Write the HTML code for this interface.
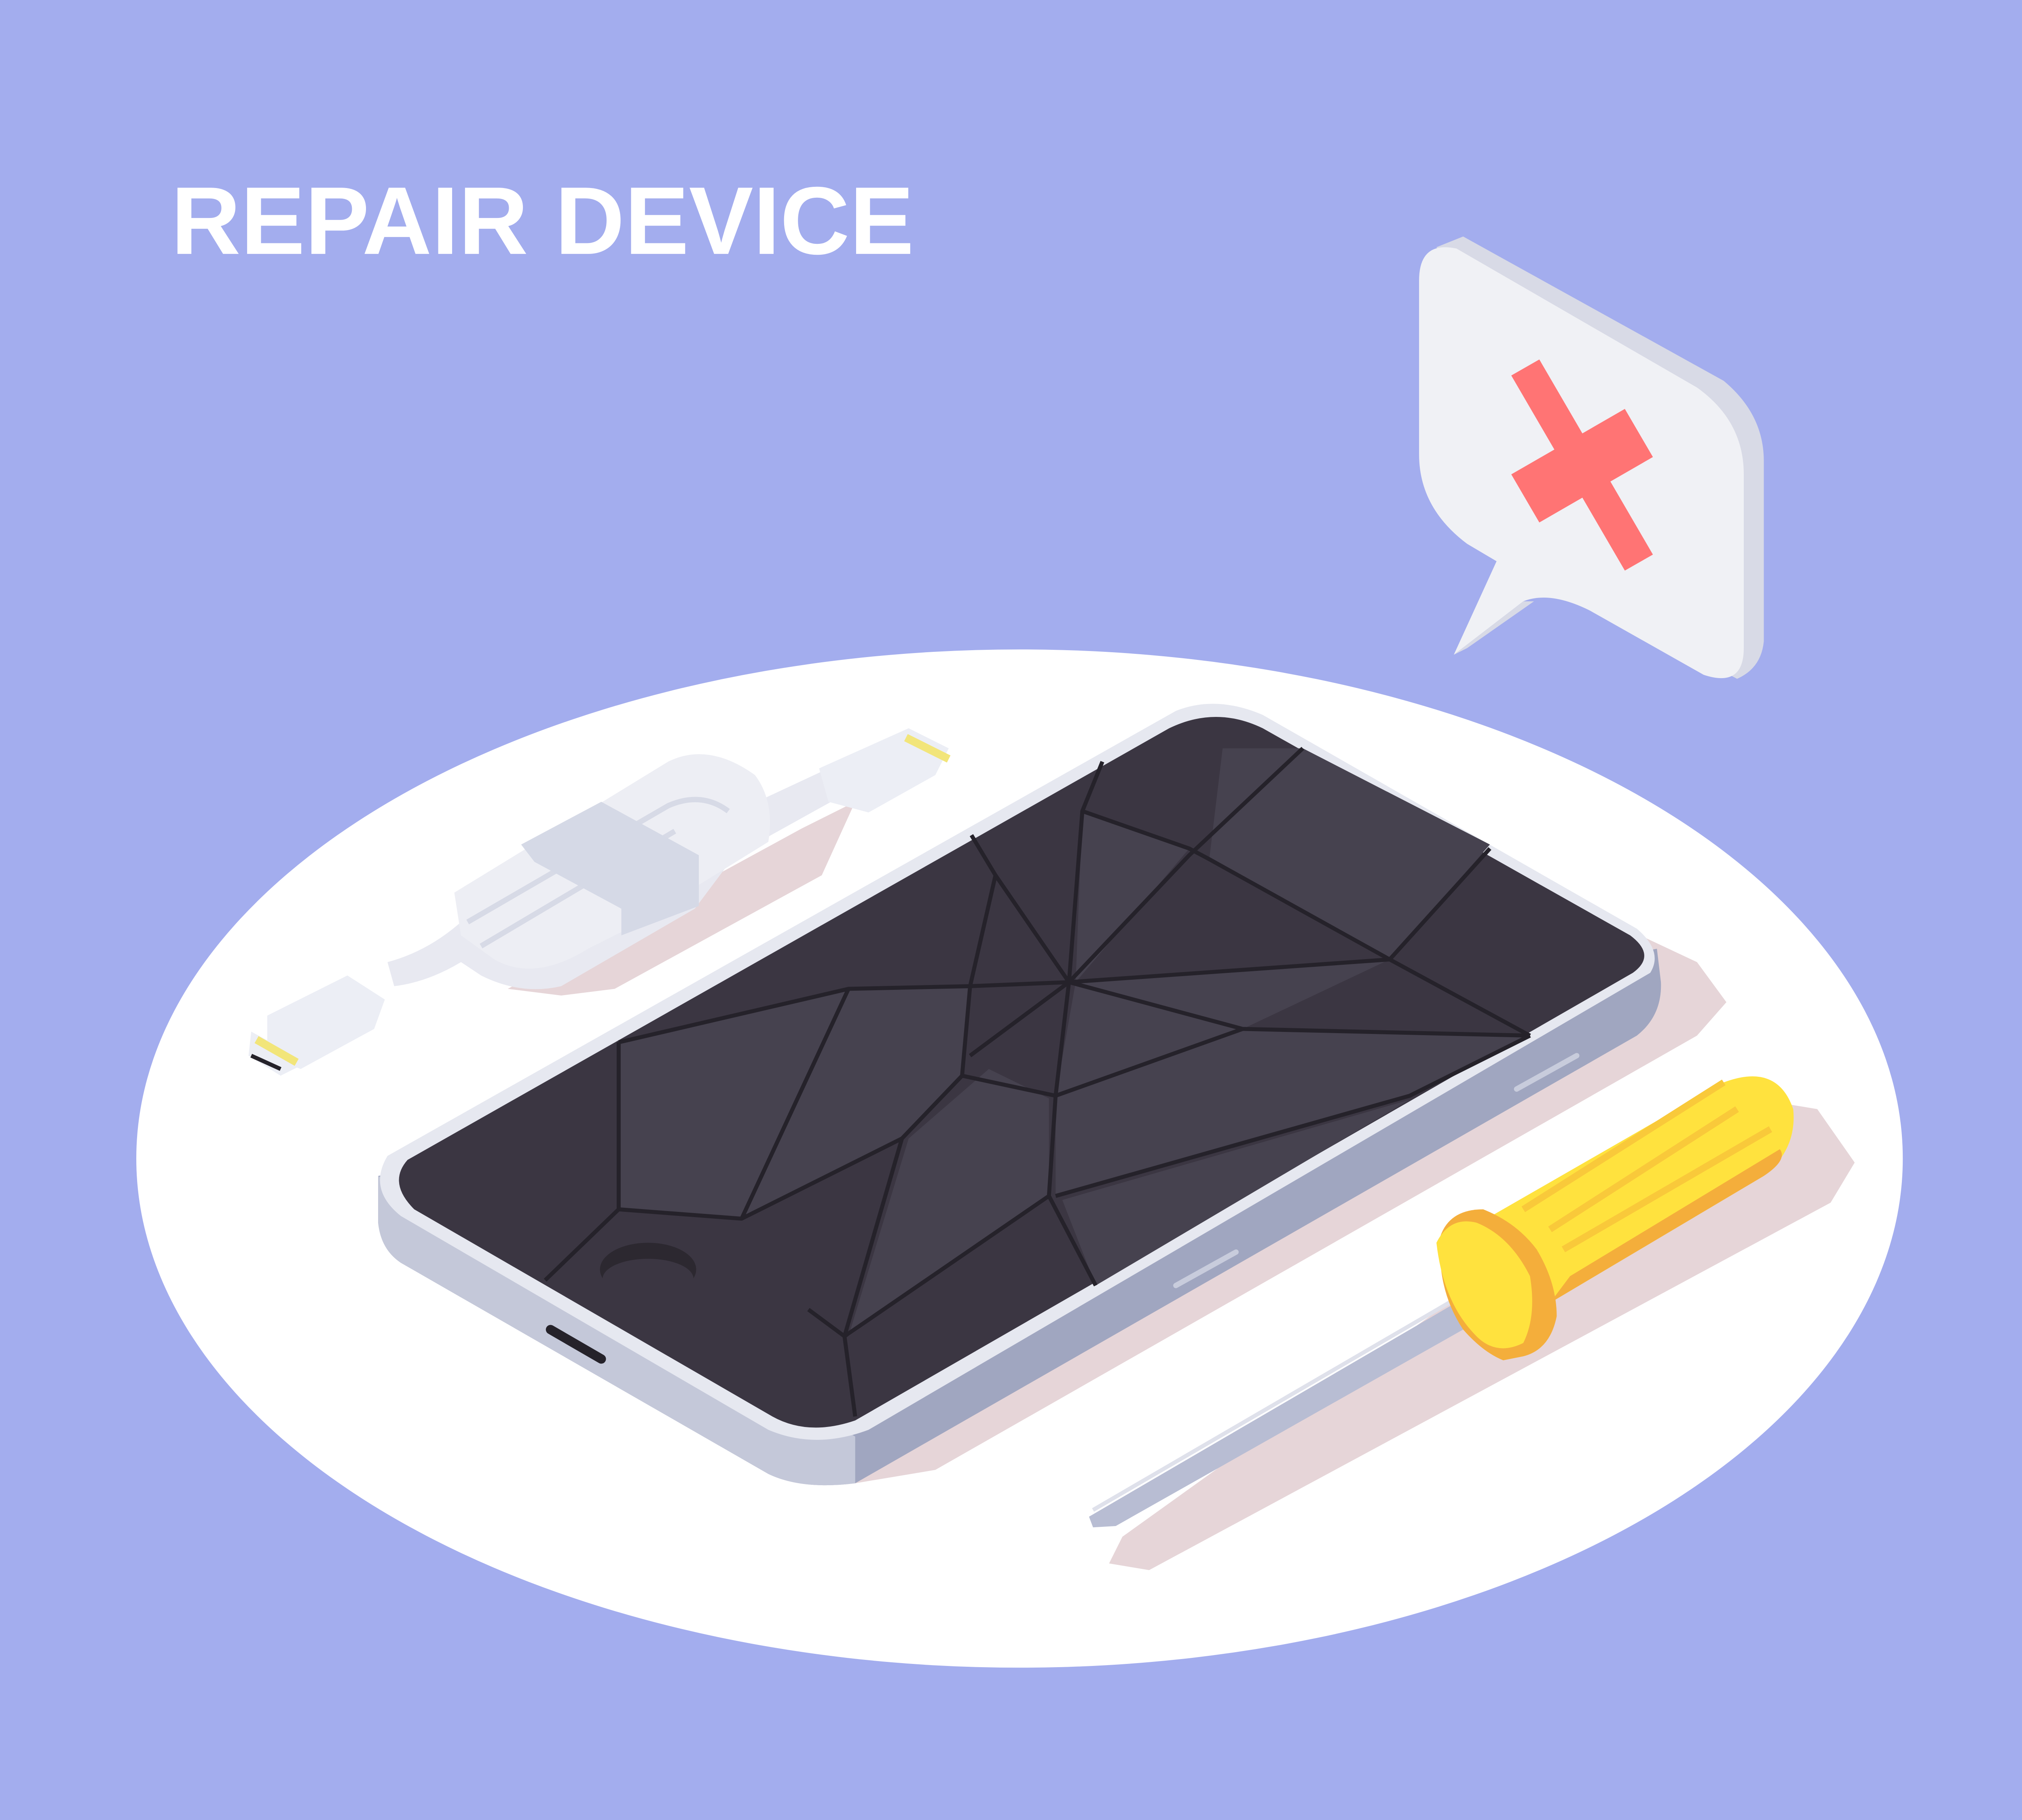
<!DOCTYPE html>
<html><head><meta charset="utf-8"><style>
html,body{margin:0;padding:0;background:#a3adee;}
svg{display:block}
</style></head><body>
<svg width="5181" height="4501" viewBox="0 0 1568 1362" preserveAspectRatio="none" xmlns="http://www.w3.org/2000/svg">
<rect width="1568" height="1362" fill="#a3adee"/>
<text x="128" y="190" font-family="Liberation Sans, sans-serif" font-weight="bold" font-size="72" fill="#fff" textLength="556" lengthAdjust="spacingAndGlyphs">REPAIR DEVICE</text>
<ellipse cx="763" cy="867" rx="661" ry="381" fill="#fff"/>

<!-- speech bubble -->
<path d="M1075 185 L1095 177 L1290 285 Q1320 310 1320 345 L1320 480 Q1318 500 1300 508 L1285 500 Z" fill="#d8dae6"/>
<path d="M1062 210 Q1062 180 1090 186 L1270 290 Q1305 315 1305 355 L1305 485 Q1305 515 1275 505 L1190 457 Q1160 442 1140 450 L1088 490 L1120 420 L1098 407 Q1062 380 1062 340 Z" fill="#f0f1f5"/>
<path d="M1088 490 L1140 450 L1148 450 L1098 485 Z" fill="#d8dae6"/>
<g fill="#ff7474">
<polygon points="1131,281 1152,269 1237,415 1216,427"/>
<polygon points="1131,355 1216,306 1237,342 1152,391"/>
</g>

<!-- shadows -->
<polygon points="1100,640 1270,720 1292,750 1270,775 700,1100 640,1110 620,1090" fill="#e6d5d8"/>
<polygon points="1300,820 1360,830 1388,870 1370,900 860,1175 830,1170 840,1150" fill="#e6d5d8"/>
<polygon points="380,740 600,620 640,600 615,655 460,740 420,745" fill="#e6d5d8"/>

<!-- phone body -->
<path d="M283 880 L283 915 Q285 935 300 945 L575 1103 Q600 1115 640 1110 L1225 775 Q1244 760 1243 735 L1240 710 Z" fill="#a0a6c0"/>
<path d="M283 880 L283 915 Q285 935 300 945 L575 1103 Q600 1115 640 1110 L640 1075 Z" fill="#c4c8d9"/>
<path d="M290 865 L880 532 Q910 520 945 535 L1225 695 Q1245 712 1235 728 L650 1070 Q610 1085 575 1070 L300 910 Q275 890 290 865 Z" fill="#e6e8f0"/>
<!-- screen -->
<path d="M305 868 L875 545 Q910 528 945 545 L1220 700 Q1240 715 1222 728 L640 1063 Q605 1075 578 1060 L310 905 Q290 885 305 868 Z" fill="#3b3642"/>
<g fill="#46424f">
<polygon points="463,780 635,740 555,912 463,905"/>
<polygon points="635,740 726,738 720,805 675,852 555,912"/>
<polygon points="805,735 1040,718 930,770 790,820"/>
<polygon points="810,607 890,635 805,735"/>
<polygon points="915,560 975,560 1115,632 1040,718 905,643"/>
<polygon points="790,820 930,770 1145,775 1055,820 790,895"/>
<polygon points="680,852 740,800 785,822 785,895 635,1000"/>
<polygon points="795,898 1055,823 820,962"/>
</g>
<g stroke="#25222a" stroke-width="3" fill="none">
<polyline points="463,780 635,740 726,738 800,735 930,770 1145,775"/>
<polyline points="463,780 463,905 555,912 675,852 720,805 726,738 745,655 727,625"/>
<polyline points="555,912 635,740"/>
<polyline points="463,905 408,958"/>
<polyline points="675,852 632,1000 640,1060"/>
<polyline points="632,1000 785,895 790,820 800,735 810,607 825,570"/>
<polyline points="785,895 820,962"/>
<polyline points="790,895 1055,820 1145,775"/>
<polyline points="745,655 800,735 890,640 975,560"/>
<polyline points="810,607 890,635 905,643 1040,718 1145,775"/>
<polyline points="1040,718 1115,635"/>
<polyline points="800,735 1040,718"/>
<polyline points="720,805 790,820 930,770"/>
<polyline points="726,790 800,735"/>
<polyline points="605,980 632,1000"/>
</g>
<ellipse cx="485" cy="950" rx="36" ry="20" fill="#2c2830"/>
<ellipse cx="485" cy="957" rx="34" ry="15" fill="#3b3642"/>
<path d="M412 995 L450 1017" stroke="#25222a" stroke-width="7" stroke-linecap="round"/>
<path d="M880 962 L925 937 M1135 815 L1180 790" stroke="#c8ccdc" stroke-width="4" stroke-linecap="round"/>

<!-- screwdriver -->
<path d="M815 1135 L1110 963 L1125 978 L835 1142 L818 1143 Z" fill="#b8bdd3"/>
<path d="M818 1130 L1110 960" stroke="#dfe1eb" stroke-width="3"/>
<path d="M1090 925 L1290 810 Q1330 795 1342 830 Q1345 860 1320 880 L1160 975 Z" fill="#ffe23e"/>
<path d="M1160 975 L1320 880 Q1338 868 1332 860 L1175 955 Z" fill="#f4ae3b"/>
<path d="M1160 920 L1300 830 M1170 935 L1325 845 M1140 905 L1290 810" stroke="#f9c93a" stroke-width="5"/>
<path d="M1078 925 Q1085 905 1110 905 Q1135 915 1150 935 Q1165 960 1165 985 Q1160 1010 1140 1015 L1125 1018 Q1110 1012 1095 995 Q1075 965 1078 925 Z" fill="#f4ae3b"/>
<path d="M1075 930 Q1085 910 1105 915 Q1130 925 1145 955 Q1150 985 1140 1005 Q1120 1015 1105 1000 Q1080 975 1075 930 Z" fill="#ffe23e"/>

<!-- cable -->
<path d="M290 720 Q320 712 345 690 L430 640 L505 600 Q530 595 545 610 L620 575 L640 590 L550 640 L520 680 L420 738 Q390 745 360 730 L345 720 Q320 735 295 738 Z" fill="#e8e9f1"/>
<path d="M340 668 L500 570 Q530 555 565 580 Q580 600 575 630 L470 695 L440 710 Q400 735 370 718 L345 700 Z" fill="#edeef4"/>
<path d="M350 690 L500 603 Q525 592 545 607 M360 708 L505 622" stroke="#d7dae6" stroke-width="4" fill="none"/>
<path d="M390 632 L450 600 L523 640 L523 678 L465 700 L465 680 L400 645 Z" fill="#d5d9e6"/>
<path d="M613 575 L680 545 L710 560 L700 580 L650 608 L620 600 Z" fill="#eceef5"/>
<path d="M678 552 L710 568" stroke="#f2e57a" stroke-width="6"/>
<path d="M200 760 L260 730 L288 748 L280 770 L225 800 L200 790 Z" fill="#eceef5"/>
<path d="M188 772 L230 795 L210 805 L186 790 Z" fill="#eceef5"/>
<path d="M192 778 L222 795" stroke="#f2e57a" stroke-width="6"/>
<path d="M188 790 L210 800" stroke="#25222a" stroke-width="3"/>
</svg>
</body></html>
